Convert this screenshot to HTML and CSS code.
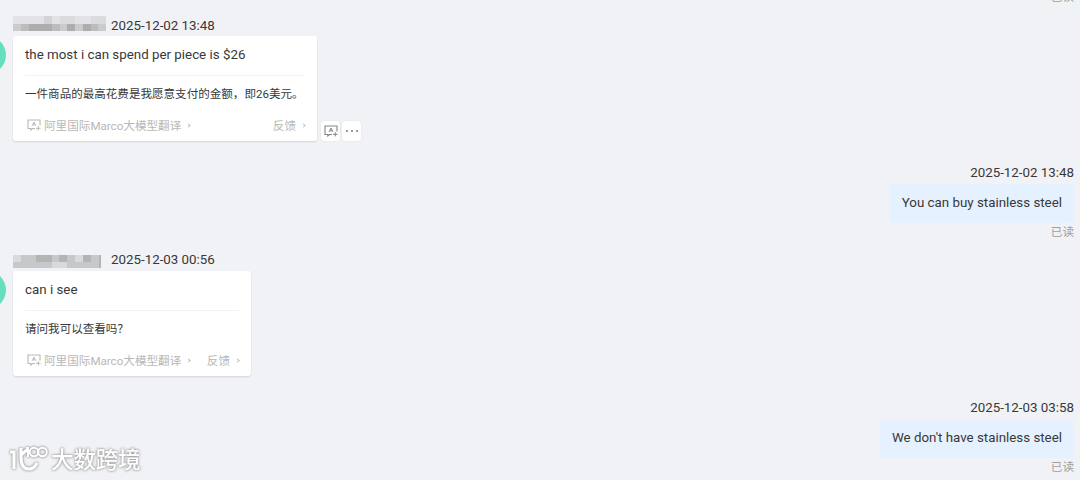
FILE: index.html
```
<!DOCTYPE html>
<html lang="zh">
<head>
    <meta charset="UTF-8">
    <title>Chat</title>
    <link rel="stylesheet" href="styles.css">
</head>
<body>
    <svg width="0" height="0" class="defs">
        <symbol id="translate" viewBox="0 0 14 12">
            <path d="M8 9.5H5.5L3.8 11V9.5H1V1h12v5.5" fill="none" stroke="currentColor" stroke-width="1.1"/>
            <path d="M5.2 6.8 7 3l1.8 3.8M5.8 5.8h2.4M9 9.3h4.6M11.3 7.2v4.2" fill="none" stroke="currentColor"/>
        </symbol>
    </svg>
    <div class="chat">
        <div class="status first">已读</div>

        <div class="message received m1">
            <span class="avatar"></span>
            <div class="meta">
                <svg class="name" width="93" height="15" viewBox="0 0 12 2" preserveAspectRatio="none" shape-rendering="crispEdges">
                    <path fill="#e2e3e6" d="M0 0h12v1H0z"/>
                    <path fill="#bcbcbd" d="M0 1h12v1H0z"/>
                    <path fill="#d3d4d6" d="M4 0h1v1H4z"/>
                    <path fill="#dadbdd" d="M6 0h2v1H6zM10 0h2v1h-2z"/>
                    <path fill="#cbcbcd" d="M0 1h1v1H0zM6 1h1v1H6zM8 1h1v1H8zM11 1h1v1h-1z"/>
                    <path fill="#adadae" d="M2 1h3v1H2zM7 1h1v1H7zM9 1h1v1H9z"/>
                </svg>
                <span class="time">2025-12-02 13:48</span>
            </div>
            <div class="row">
                <div class="card">
                    <p class="text">the most i can spend per piece is $26</p>
                    <p class="translation">一件商品的最高花费是我愿意支付的金额，即26美元。</p>
                    <div class="source">
                        <svg class="icon"><use href="#translate"/></svg>
                        <span>阿里国际Marco大模型翻译</span><i class="arrow"></i>
                        <span class="feedback">反馈</span><i class="arrow"></i>
                    </div>
                </div>
                <div class="tools">
                    <button><svg class="icon"><use href="#translate"/></svg></button>
                    <button><span class="dots"></span></button>
                </div>
            </div>
        </div>

        <div class="message sent m2">
            <div class="time">2025-12-02 13:48</div>
            <div class="bubble">You can buy stainless steel</div>
            <div class="status">已读</div>
        </div>

        <div class="message received m3">
            <span class="avatar"></span>
            <div class="meta">
                <svg class="name short" width="88" height="13" viewBox="0 0 88 13" preserveAspectRatio="none" shape-rendering="crispEdges">
                    <path fill="#c7c8ca" d="M0 0h88v13H0z"/>
                    <path fill="#b4b4b5" d="M23 0h16v7H23zM46 0h8v7H46zM70 0h8v7H70zM86 0h2v13h-2z"/>
                    <path fill="#d9dadc" d="M0 0h8v7H0zM62 0h8v7H62zM39 7h15v6H39z"/>
                </svg>
                <span class="time">2025-12-03 00:56</span>
            </div>
            <div class="row">
                <div class="card narrow">
                    <p class="text">can i see</p>
                    <p class="translation">请问我可以查看吗？</p>
                    <div class="source">
                        <svg class="icon"><use href="#translate"/></svg>
                        <span>阿里国际Marco大模型翻译</span><i class="arrow"></i>
                        <span class="feedback">反馈</span><i class="arrow"></i>
                    </div>
                </div>
            </div>
        </div>

        <div class="message sent m4">
            <div class="time">2025-12-03 03:58</div>
            <div class="bubble">We don't have stainless steel</div>
            <div class="status">已读</div>
        </div>
    </div>

    <div class="watermark">
        <svg width="42" height="30" viewBox="0 0 42 30" fill="none" stroke="#fff" stroke-width="3">
            <path d="M1 8h4v17M12 4v9c0 8 3 12 8 12 4 0 6-2 8-6M19 5l-7 6"/>
            <path d="M17 4h2v9" stroke-width="2"/>
            <circle cx="25" cy="8" r="4.3" stroke-width="2"/>
            <circle cx="33.5" cy="8" r="4.3" stroke-width="2"/>
        </svg>
        <span>大数跨境</span>
    </div>
</body>
</html>
```
FILE: styles.css
```
* {
    box-sizing: border-box;
}
body {
    margin: 0;
    height: 480px;
    overflow: hidden;
    background: #f1f2f6;
    color: #383838;
    font-family: Roboto, "Noto Sans CJK SC", sans-serif;
    font-size: 13.33px;
}
p {
    margin: 0;
}
.defs {
    position: absolute;
}
.chat {
    height: 480px;
    padding: 0 6px 0 13px;
    overflow: hidden;
}
.message {
    position: relative;
    display: flex;
    flex-direction: column;
    align-items: flex-start;
}
.sent {
    align-items: flex-end;
}
.status {
    color: #a0a0a0;
    font-size: 11.6px;
    line-height: 16px;
    text-align: right;
}
.first {
    height: 16px;
    margin-top: -11px;
    margin-bottom: 11px;
}
.m2 {
    margin-top: 23px;
}
.m3 {
    margin-top: 11px;
}
.m4 {
    margin-top: 23px;
}
.avatar {
    position: absolute;
    left: -45px;
    top: 20px;
    width: 38px;
    height: 38px;
    border-radius: 50%;
    background: #66dfbd;
}
.meta {
    display: flex;
    height: 20px;
}
.name {
    margin-right: 5px;
}
.short {
    margin-top: 4px;
    margin-right: 10px;
}
.time {
    line-height: 18px;
}
.m1 .time {
    line-height: 19px;
}
.m3 .time {
    line-height: 17px;
}
.row {
    display: flex;
    align-items: flex-end;
}
.card {
    width: 304px;
    height: 105px;
    padding: 0 12px;
    background: #fff;
    border-radius: 3px;
    box-shadow: 0 1px 2px rgba(0,0,0,0.12);
}
.narrow {
    width: 238px;
}
.text {
    height: 40px;
    line-height: 38px;
    border-bottom: 1px solid #f1f1f2;
}
.translation {
    height: 37px;
    line-height: 37px;
    font-size: 11.55px;
    white-space: nowrap;
}
.source {
    display: flex;
    align-items: center;
    height: 24px;
    padding-left: 2px;
    color: #b8b8b8;
    font-size: 11.6px;
    white-space: nowrap;
}
.icon {
    width: 14px;
    height: 12px;
}
.source .icon {
    margin-right: 3px;
}
.feedback {
    margin-left: auto;
}
.arrow {
    width: 3px;
    height: 3px;
    margin: 1px 0 0 6px;
    border: solid #bbb;
    border-width: 1px 1px 0 0;
    transform: rotate(45deg);
}
.tools {
    display: flex;
    gap: 2px;
    margin-left: 4px;
}
button {
    display: flex;
    align-items: center;
    justify-content: center;
    width: 19px;
    height: 20px;
    padding: 0;
    background: #fff;
    border: none;
    border-radius: 4px;
    color: #858585;
    box-shadow: 0 0 2px rgba(0,0,0,0.08);
}
.dots {
    width: 2px;
    height: 2px;
    background: #999;
    box-shadow: -5px 0 #999, 5px 0 #999;
}
.bubble {
    height: 39px;
    margin-top: 2px;
    padding: 0 12px;
    background: #e6f1ff;
    border-radius: 3px;
    line-height: 38px;
}
.m4 .bubble {
    line-height: 37px;
}
.sent .status {
    margin-top: 1px;
}
.watermark {
    position: absolute;
    left: 9px;
    top: 444px;
    display: flex;
    color: #fff;
    font-size: 22.4px;
    font-weight: 500;
    line-height: 33px;
    filter: drop-shadow(0 0 1px #999) drop-shadow(0 0 1px #bbb);
}
```
